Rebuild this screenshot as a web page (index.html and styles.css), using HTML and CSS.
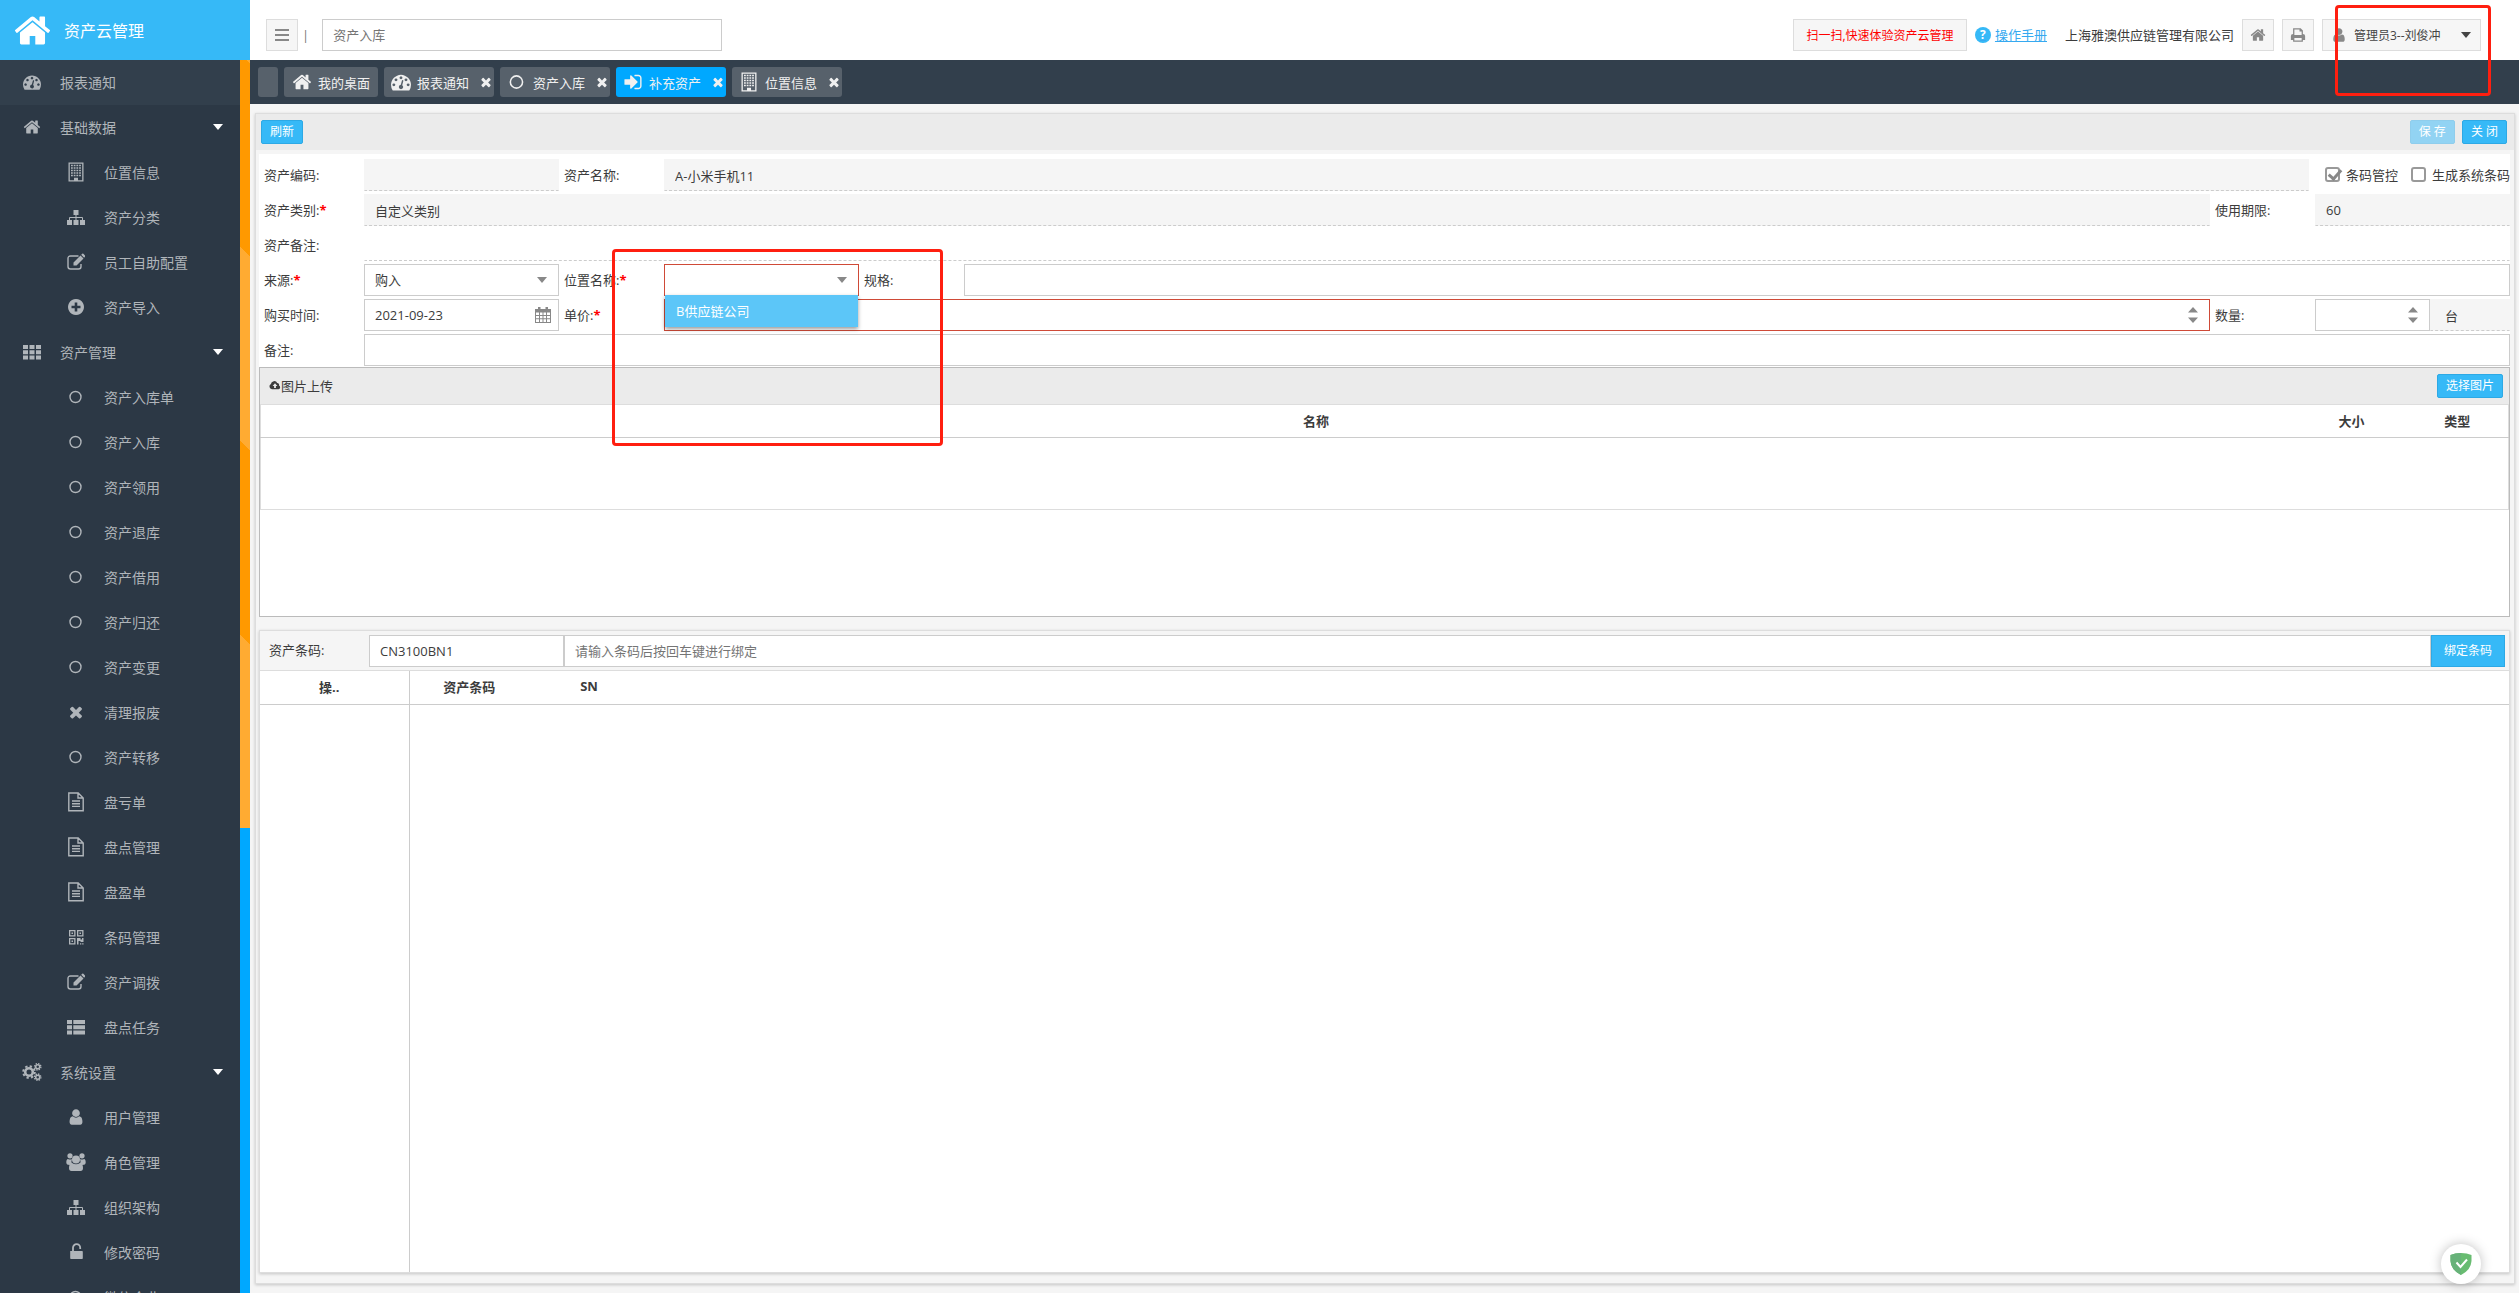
FILE: index.html
```html
<!DOCTYPE html>
<html lang="zh-CN">
<head>
    <meta charset="UTF-8">
    <meta name="viewport" content="width=device-width, initial-scale=1.0">
    <title>资产云管理</title>
    <link rel="stylesheet" href="styles.css">
</head>
<body>
    <!-- Icon sprite -->
    <svg class="sprite" aria-hidden="true">
        <symbol id="i-home" viewBox="0 0 1792 1792"><path d="M1472 992v480q0 26-19 45t-45 19h-384v-384h-256v384h-384q-26 0-45-19t-19-45v-480q0-1 .5-3t.5-3l575-474 575 474q1 2 1 6zm223-69l-62 74q-8 9-21 11h-3q-13 0-21-7l-692-577-692 577q-12 8-24 7-13-2-21-11l-62-74q-8-10-7-23.5t11-21.5l719-599q32-26 76-26t76 26l244 204v-195q0-14 9-23t23-9h192q14 0 23 9t9 23v408l219 182q10 8 11 21.5t-7 23.5z"/></symbol>
        <symbol id="i-dash" viewBox="0 0 1792 1792"><path d="M384 1152q0-53-37.5-90.5t-90.5-37.5-90.5 37.5-37.5 90.5 37.5 90.5 90.5 37.5 90.5-37.5 37.5-90.5zm192-448q0-53-37.5-90.5t-90.5-37.5-90.5 37.5-37.5 90.5 37.5 90.5 90.5 37.5 90.5-37.5 37.5-90.5zm428 481l101-382q6-26-7.5-48.5t-38.5-29.5-48 6.5-30 39.5l-101 382q-60 5-107 43.5t-63 98.5q-20 77 20 146t117 89 146-20 89-117q16-60-6-117t-72-91zm660-33q0-53-37.5-90.5t-90.5-37.5-90.5 37.5-37.5 90.5 37.5 90.5 90.5 37.5 90.5-37.5 37.5-90.5zm-640-640q0-53-37.5-90.5t-90.5-37.5-90.5 37.5-37.5 90.5 37.5 90.5 90.5 37.5 90.5-37.5 37.5-90.5zm448 192q0-53-37.5-90.5t-90.5-37.5-90.5 37.5-37.5 90.5 37.5 90.5 90.5 37.5 90.5-37.5 37.5-90.5zm320 448q0 261-141 483-19 29-54 29h-1402q-35 0-54-29-141-221-141-483 0-182 71-348t191-286 286-191 348-71 348 71 286 191 191 286 71 348z"/></symbol>
        <symbol id="i-signin" viewBox="0 0 1792 1792"><path d="M1312 896q0 26-19 45l-544 544q-19 19-45 19t-45-19-19-45v-288h-448q-26 0-45-19t-19-45v-384q0-26 19-45t45-19h448v-288q0-26 19-45t45-19 45 19l544 544q19 19 19 45zm352-352v704q0 119-84.5 203.5t-203.5 84.5h-320q-13 0-22.5-9.5t-9.5-22.5q0-4-1-20t-.5-26.5 3-23.5 10-19.5 20.5-6.5h320q66 0 113-47t47-113v-704q0-66-47-113t-113-47h-312l-11.5-1-11.5-3-8-5.5-7-9-2-13.5q0-4-1-20t-.5-26.5 3-23.5 10-19.5 20.5-6.5h320q119 0 203.5 84.5t84.5 203.5z"/></symbol>
        <symbol id="i-times" viewBox="0 0 1792 1792"><path d="M1490 1322q0 40-28 68l-136 136q-28 28-68 28t-68-28l-294-294-294 294q-28 28-68 28t-68-28l-136-136q-28-28-28-68t28-68l294-294-294-294q-28-28-28-68t28-68l136-136q28-28 68-28t68 28l294 294 294-294q28-28 68-28t68 28l136 136q28 28 28 68t-28 68l-294 294 294 294q28 28 28 68z"/></symbol>
        <symbol id="i-user" viewBox="0 0 1792 1792"><path d="M1536 1399q0 109-62.5 187t-150.5 78h-854q-88 0-150.5-78t-62.5-187q0-85 8.5-160.5t31.5-152 58.5-131 94-89 134.5-34.5q131 128 313 128t313-128q76 0 134.5 34.5t94 89 58.5 131 31.5 152 8.5 160.5zm-256-887q0 159-112.5 271.5t-271.5 112.5-271.5-112.5-112.5-271.5 112.5-271.5 271.5-112.5 271.5 112.5 112.5 271.5z"/></symbol>
        <symbol id="i-building" viewBox="0 0 18 20"><path fill-rule="evenodd" d="M1.500.5h15v19h-15zM2.800 1.800v16.400h4.200v-2.400h4v2.400h4.200V1.800z"/><path d="M4 3.500h10.500M4 6h10.500M4 8.500h10.500M4 11h10.500M4 13.500h10.500" stroke="currentColor" stroke-width="1.600" stroke-dasharray="1.800 .9"/></symbol>
        <symbol id="i-sitemap" viewBox="0 0 18 18"><path d="M6.500 2h5v5h-5zM0 12h5v5H0zM6.500 12h5v5h-5zM13 12h5v5h-5z"/><path fill="none" stroke="currentColor" d="M9 7v5M2.500 12V9.500h13V12"/></symbol>
        <symbol id="i-edit" viewBox="0 0 18 18"><path fill="none" stroke="currentColor" stroke-width="1.400" d="M11.500 3H3.500Q1 3 1 5.500v8Q1 16 3.500 16h8Q14 16 14 13.500V11"/><path d="M6.500 9.500l7-7 3 3-7 7h-3zM14.200 1.800l1-1q.6-.5 1.200 0l1.700 1.700q.5.600 0 1.200l-1 1z"/></symbol>
        <symbol id="i-plus" viewBox="0 0 18 18"><path fill-rule="evenodd" d="M9 1a8 8 0 1 0 .01 0zM7.700 4.500h2.600v3.200h3.200v2.600h-3.200v3.200H7.700v-3.200H4.500V7.700h3.200z"/></symbol>
        <symbol id="i-th" viewBox="0 0 18 18"><path d="M0 2h5v4H0zM6.500 2h5v4h-5zM13 2h5v4h-5zM0 7.300h5v4H0zM6.500 7.300h5v4h-5zM13 7.300h5v4h-5zM0 12.600h5v4H0zM6.500 12.600h5v4h-5zM13 12.600h5v4h-5z"/></symbol>
        <symbol id="i-circle" viewBox="0 0 18 18"><circle cx="8.500" cy="9" r="5.500" fill="none" stroke="currentColor" stroke-width="1.400"/></symbol>
        <symbol id="i-file" viewBox="0 0 18 20"><path fill="none" stroke="currentColor" stroke-width="1.400" d="M1.800 1h9.400l5 5v12.800H1.800zM11 1v5h5M5 9h8M5 11.700h8M5 14.400h8"/></symbol>
        <symbol id="i-qr" viewBox="0 0 18 18"><path fill-rule="evenodd" d="M2 2h6.500v6.500H2zM3.300 3.300v3.900h3.900V3.300zM10 2h6.500v6.500H10zM11.300 3.300v3.900h3.900V3.300zM2 10h6.500v6.500H2zM3.300 11.300v3.900h3.900v-3.900zM4.500 4.500H6V6H4.500zM12.500 4.500H14V6h-1.500zM4.500 12.500H6V14H4.500zM10 10h3.500v1.500H15V10h1.500v4h-3v-1h-2v3.500H10zM13 15.200h1.300v1.300H13zM15.200 15.200h1.300v1.300h-1.300z"/></symbol>
        <symbol id="i-list" viewBox="0 0 18 18"><path d="M0 2h5v4H0zM6.300 2H18v4H6.300zM0 7.300h5v4H0zM6.300 7.300H18v4H6.300zM0 12.600h5v4H0zM6.300 12.600H18v4H6.300z"/></symbol>
        <symbol id="i-cogs" viewBox="0 0 20 20"><g fill="none" stroke="currentColor"><circle cx="7" cy="10" r="3.800" stroke-width="2.600"/><circle cx="7" cy="10" r="5.800" stroke-width="2" stroke-dasharray="2.300 2.255"/><circle cx="15.700" cy="4.800" r="2" stroke-width="1.500"/><circle cx="15.700" cy="4.800" r="3.200" stroke-width="1.300" stroke-dasharray="1.400 1.113"/><circle cx="15.700" cy="15.200" r="2" stroke-width="1.500"/><circle cx="15.700" cy="15.200" r="3.200" stroke-width="1.300" stroke-dasharray="1.400 1.113"/></g></symbol>
        <symbol id="i-users" viewBox="0 0 20 20"><circle cx="4" cy="3.800" r="2.600"/><circle cx="16" cy="3.800" r="2.600"/><path d="M2 7q2 1 4 0-1.300 2.500.5 5-2 0-2.800 1Q.3 13 .3 10.500.3 7 2 7zM18 7q-2 1-4 0 1.300 2.500-.5 5 2 0 2.800 1 3.400 0 3.400-2.500Q19.700 7 18 7z"/><circle cx="10" cy="7.500" r="4"/><path d="M6 11q4 2.500 8 0 3 .7 3 5 0 3-2.500 3h-9Q3 19 3 16q0-4.300 3-5z"/></symbol>
        <symbol id="i-unlock" viewBox="0 0 18 20"><path d="M3 9h12q.8 0 .8.800v6.400q0 .8-.8.800H4q-.8 0-.8-.8V9z"/><path fill="none" stroke="currentColor" stroke-width="1.800" d="M6 9.500V5.800a3.600 3.600 0 0 1 7.200 0V7"/></symbol>
        <symbol id="i-print" viewBox="0 0 18 18"><path fill-rule="evenodd" d="M3.500 1.500h8.500l2.500 2.500v4q2.500 0 2.500 2v4.500h-2.500v2h-11v-2H1V10q0-2 2.500-2zM4.900 2.900V9h8.200V5.200h-2.400V2.900zM4.900 12.500v2.600h8.200v-2.600z"/></symbol>
        <symbol id="i-calendar" viewBox="0 0 18 18"><path fill-rule="evenodd" d="M1 3h3V1h2.500v2h5V1H14v2h3v14H1zM2 6.500v2.400h3V6.500zM6 6.500v2.400h2.500V6.500zM9.500 6.500v2.400H12V6.500zM13 6.500v2.400h3V6.500zM2 9.900v2.400h3V9.900zM6 9.900v2.400h2.500V9.900zM9.500 9.900v2.400H12V9.900zM13 9.900v2.400h3V9.900zM2 13.300V16h3v-2.700zM6 13.300V16h2.500v-2.700zM9.500 13.300V16H12v-2.700zM13 13.300V16h3v-2.700z"/></symbol>
        <symbol id="i-cloud" viewBox="0 0 20 16"><path fill-rule="evenodd" d="M5 15a4.500 4.500 0 0 1-1.800-8.500 5.500 5.500 0 0 1 10.500-1.700 3 3 0 0 1 3 4A3.300 3.300 0 0 1 16 15zM10 5L6 9.500h2.500V13h3V9.500H14z"/></symbol>
        <symbol id="i-down" viewBox="0 0 10 6"><path d="M0 0h10L5 6z"/></symbol>
        <symbol id="i-spin" viewBox="0 0 10 16"><path d="M0 5.500h10L5 0zM0 10.500h10L5 16z"/></symbol>
        <symbol id="i-bars" viewBox="0 0 14 14"><path d="M0 1h14v2H0zM0 6h14v2H0zM0 11h14v2H0z"/></symbol>
    </svg>

    <div class="app">
        <aside class="sidebar">
            <div class="logo"><svg><use href="#i-home"/></svg><span>资产云管理</span></div>
            <div class="menu-wrap">
                <nav class="menu">
                    <a href="#" class="top active"><svg><use href="#i-dash"/></svg>报表通知</a>
                    <a href="#" class="top"><svg><use href="#i-home"/></svg>基础数据<svg class="caret"><use href="#i-down"/></svg></a>
                    <a href="#" class="sub"><svg class="tall"><use href="#i-building"/></svg>位置信息</a>
                    <a href="#" class="sub"><svg><use href="#i-sitemap"/></svg>资产分类</a>
                    <a href="#" class="sub"><svg><use href="#i-edit"/></svg>员工自助配置</a>
                    <a href="#" class="sub"><svg><use href="#i-plus"/></svg>资产导入</a>
                    <a href="#" class="top"><svg><use href="#i-th"/></svg>资产管理<svg class="caret"><use href="#i-down"/></svg></a>
                    <a href="#" class="sub"><svg><use href="#i-circle"/></svg>资产入库单</a>
                    <a href="#" class="sub"><svg><use href="#i-circle"/></svg>资产入库</a>
                    <a href="#" class="sub"><svg><use href="#i-circle"/></svg>资产领用</a>
                    <a href="#" class="sub"><svg><use href="#i-circle"/></svg>资产退库</a>
                    <a href="#" class="sub"><svg><use href="#i-circle"/></svg>资产借用</a>
                    <a href="#" class="sub"><svg><use href="#i-circle"/></svg>资产归还</a>
                    <a href="#" class="sub"><svg><use href="#i-circle"/></svg>资产变更</a>
                    <a href="#" class="sub"><svg><use href="#i-times"/></svg>清理报废</a>
                    <a href="#" class="sub"><svg><use href="#i-circle"/></svg>资产转移</a>
                    <a href="#" class="sub"><svg class="tall"><use href="#i-file"/></svg>盘亏单</a>
                    <a href="#" class="sub"><svg class="tall"><use href="#i-file"/></svg>盘点管理</a>
                    <a href="#" class="sub"><svg class="tall"><use href="#i-file"/></svg>盘盈单</a>
                    <a href="#" class="sub"><svg><use href="#i-qr"/></svg>条码管理</a>
                    <a href="#" class="sub"><svg><use href="#i-edit"/></svg>资产调拨</a>
                    <a href="#" class="sub"><svg><use href="#i-list"/></svg>盘点任务</a>
                    <a href="#" class="top"><svg class="wide"><use href="#i-cogs"/></svg>系统设置<svg class="caret"><use href="#i-down"/></svg></a>
                    <a href="#" class="sub"><svg><use href="#i-user"/></svg>用户管理</a>
                    <a href="#" class="sub"><svg class="wide"><use href="#i-users"/></svg>角色管理</a>
                    <a href="#" class="sub"><svg><use href="#i-sitemap"/></svg>组织架构</a>
                    <a href="#" class="sub"><svg class="tall"><use href="#i-unlock"/></svg>修改密码</a>
                    <a href="#" class="sub"><svg><use href="#i-circle"/></svg>微信企业</a>
                </nav>
                <div class="scroll-track"><div class="scroll-thumb"></div></div>
            </div>
        </aside>

        <div class="main">
            <header class="header">
                <button type="button" class="tool" aria-label="菜单"><svg class="bars"><use href="#i-bars"/></svg></button>
                <span class="divider">|</span>
                <input type="text" class="search" placeholder="资产入库" aria-label="搜索">
                <div class="header-right">
                    <button type="button" class="tool scan">扫一扫,快速体验资产云管理</button>
                    <a href="#" class="manual"><span class="question">?</span><span class="manual-text">操作手册</span></a>
                    <span class="company">上海雅澳供应链管理有限公司</span>
                    <button type="button" class="tool" aria-label="首页"><svg><use href="#i-home"/></svg></button>
                    <button type="button" class="tool" aria-label="打印"><svg><use href="#i-print"/></svg></button>
                    <button type="button" class="tool account"><svg><use href="#i-user"/></svg><span>管理员3--刘俊冲</span><svg class="caret"><use href="#i-down"/></svg></button>
                </div>
                <div class="mark mark-user"></div>
            </header>

            <nav class="tabs">
                <button type="button" class="tab blank" aria-label="更多"></button>
                <button type="button" class="tab home"><svg><use href="#i-home"/></svg>我的桌面</button>
                <button type="button" class="tab"><svg><use href="#i-dash"/></svg>报表通知<svg class="close"><use href="#i-times"/></svg></button>
                <button type="button" class="tab"><svg><use href="#i-circle"/></svg>资产入库<svg class="close"><use href="#i-times"/></svg></button>
                <button type="button" class="tab current"><svg><use href="#i-signin"/></svg>补充资产<svg class="close"><use href="#i-times"/></svg></button>
                <button type="button" class="tab"><svg><use href="#i-building"/></svg>位置信息<svg class="close"><use href="#i-times"/></svg></button>
            </nav>

            <main class="panel">
                <div class="toolbar">
                    <button type="button" class="btn">刷新</button>
                    <div class="toolbar-right">
                        <button type="button" class="btn" disabled>保 存</button>
                        <button type="button" class="btn">关 闭</button>
                    </div>
                </div>
                <div class="panel-body">
                    <form class="form">
                        <div class="row">
                            <label class="lbl" for="code">资产编码:</label>
                            <div class="field readonly w-md"><input id="code" type="text" readonly></div>
                            <label class="lbl" for="name">资产名称:</label>
                            <div class="field readonly"><input id="name" type="text" value="A-小米手机11" readonly></div>
                            <div class="checks">
                                <label><input type="checkbox" checked>条码管控</label>
                                <label><input type="checkbox">生成系统条码</label>
                            </div>
                        </div>
                        <div class="row">
                            <label class="lbl" for="category">资产类别:<b>*</b></label>
                            <div class="field readonly"><input id="category" type="text" value="自定义类别" readonly></div>
                            <label class="lbl" for="term">使用期限:</label>
                            <div class="field readonly w-md"><input id="term" type="text" value="60" readonly></div>
                        </div>
                        <div class="row">
                            <label class="lbl" for="assetNote">资产备注:</label>
                            <div class="field readonly plain"><input id="assetNote" type="text" readonly></div>
                        </div>
                        <div class="row">
                            <label class="lbl" for="source">来源:<b>*</b></label>
                            <div class="field w-md">
                                <select id="source"><option>购入</option></select>
                                <svg class="arrow"><use href="#i-down"/></svg>
                            </div>
                            <label class="lbl" for="location">位置名称:<b>*</b></label>
                            <div class="field invalid w-md">
                                <select id="location"><option></option><option>B供应链公司</option></select>
                                <svg class="arrow"><use href="#i-down"/></svg>
                                <ul class="dropdown"><li>B供应链公司</li></ul>
                                <div class="mark mark-location"></div>
                            </div>
                            <label class="lbl" for="spec">规格:</label>
                            <div class="field"><input id="spec" type="text"></div>
                        </div>
                        <div class="row">
                            <label class="lbl" for="date">购买时间:</label>
                            <div class="field w-md">
                                <input id="date" type="text" value="2021-09-23">
                                <svg class="calendar"><use href="#i-calendar"/></svg>
                            </div>
                            <label class="lbl" for="price">单价:<b>*</b></label>
                            <div class="field invalid">
                                <input id="price" type="number">
                                <svg class="spin"><use href="#i-spin"/></svg>
                            </div>
                            <label class="lbl" for="count">数量:</label>
                            <div class="field w-sm">
                                <input id="count" type="number">
                                <svg class="spin"><use href="#i-spin"/></svg>
                            </div>
                            <div class="field readonly w-xs"><input type="text" value="台" aria-label="单位" readonly></div>
                        </div>
                        <div class="row">
                            <label class="lbl" for="note">备注:</label>
                            <div class="field"><input id="note" type="text"></div>
                        </div>
                    </form>

                    <section class="upload">
                        <div class="upload-head">
                            <span><svg><use href="#i-cloud"/></svg>图片上传</span>
                            <button type="button" class="btn">选择图片</button>
                        </div>
                        <table>
                            <thead><tr><th class="c-check"></th><th>名称</th><th class="c-size">大小</th><th class="c-type">类型</th></tr></thead>
                            <tbody><tr><td colspan="4"></td></tr></tbody>
                        </table>
                    </section>

                    <section class="barcode">
                        <div class="barcode-head">
                            <label for="barcode">资产条码:</label>
                            <div class="field w-md"><input id="barcode" type="text" value="CN3100BN1"></div>
                            <div class="field"><input type="text" placeholder="请输入条码后按回车键进行绑定" aria-label="绑定条码"></div>
                            <button type="button" class="btn bind">绑定条码</button>
                        </div>
                        <div class="barcode-grid">
                            <table>
                                <thead><tr><th class="c-op">操..</th><th class="c-code">资产条码</th><th class="c-code">SN</th><th></th></tr></thead>
                                <tbody><tr><td class="c-op"></td><td></td><td></td><td></td></tr></tbody>
                            </table>
                        </div>
                    </section>
                </div>
            </main>
        </div>
    </div>

    <button type="button" class="shield" aria-label="防护">
        <svg viewBox="0 0 22 22"><path fill="#68bc71" d="M11 0q6 0 10.500 2v6Q21 17 11 22 1 17 .500 8V2Q5 0 11 0z"/><path fill="#67b279" d="M11 0v22Q1 17 .500 8V2Q5 0 11 0z"/><path fill="none" stroke="#fff" stroke-width="2" d="M6.500 9.500l4 4.500L17 6.500"/></svg>
    </button>
</body>
</html>
```
FILE: styles.css
```css
* {
    box-sizing: border-box;
}

body {
    margin: 0;
    font-family: "Open Sans", "Noto Sans CJK SC", sans-serif;
    font-size: 13px;
    color: #3c3c3c;
    background-color: #f5f5f5;
}

button, input, select {
    font-family: inherit;
    font-size: inherit;
    color: inherit;
}

button {
    cursor: pointer;
}

svg {
    width: 16px;
    height: 16px;
    fill: currentColor;
    flex: none;
}

.sprite {
    display: none;
}

.app {
    display: flex;
    height: 100vh;
    overflow: hidden;
}

/* Sidebar */
.sidebar {
    display: flex;
    flex-direction: column;
    flex: none;
    width: 250px;
    background-color: #2c3845;
}

.logo {
    display: flex;
    align-items: center;
    gap: 12px;
    flex: none;
    height: 60px;
    padding-left: 13px;
    background-color: #36b9f7;
    color: #fff;
    font-size: 16px;
}

.logo svg {
    width: 39px;
    height: 39px;
}

.menu-wrap {
    display: flex;
    flex: 1;
    min-height: 0;
}

.menu {
    flex: 1;
    overflow: hidden;
}

.menu a {
    display: flex;
    align-items: center;
    height: 45px;
    padding-bottom: 2px;
    color: #b0b5ba;
    font-size: 14px;
    text-decoration: none;
}

.menu svg {
    width: 18px;
    height: 18px;
}

.menu .tall {
    height: 20px;
}

.menu .wide {
    width: 20px;
    height: 20px;
    margin: 0 -1px;
}

.menu .top {
    gap: 19px;
    padding-left: 23px;
    padding-right: 17px;
}

.menu .sub {
    gap: 19px;
    padding-left: 67px;
}

.menu .active {
    background-color: #323f4c;
}

.menu .caret {
    width: 10px;
    height: 6px;
    margin-left: auto;
    color: #fff;
}

.scroll-track {
    width: 10px;
    background-color: #00a8ff;
}

.scroll-thumb {
    height: 768px;
    background-image: repeating-linear-gradient(45deg, #ffab32 0, #ffab32 137px, #ff9900 137px, #ff9900 274px);
}

/* Header */
.main {
    display: flex;
    flex-direction: column;
    flex: 1;
    min-width: 0;
}

.header {
    position: relative;
    display: flex;
    align-items: center;
    flex: none;
    height: 60px;
    padding: 10px 38px 0 16px;
    background-color: #fff;
}

.tool {
    display: flex;
    align-items: center;
    justify-content: center;
    width: 32px;
    height: 32px;
    padding: 0;
    border: 1px solid #ddd;
    background-color: #f6f6f6;
    color: #888;
}

.bars {
    width: 14px;
    height: 14px;
}

.divider {
    margin: 0 13px 0 4px;
    color: #777;
}

.search {
    width: 400px;
    height: 32px;
    padding: 0 10px;
    border: 1px solid #ccc;
}

.header-right {
    display: flex;
    align-items: center;
    gap: 8px;
    margin-left: auto;
}

.scan {
    width: 174px;
    font-size: 12px;
    color: #f00;
}

.manual {
    display: flex;
    align-items: center;
    gap: 4px;
    color: #36a9f0;
}

.question {
    width: 16px;
    height: 16px;
    border-radius: 50%;
    background-color: #36b9f7;
    color: #fff;
    font-size: 12px;
    font-weight: bold;
    line-height: 16px;
    text-align: center;
}

.manual-text {
    text-decoration: underline;
}

.company {
    margin-left: 10px;
}

.manual-text,
.company {
    padding-bottom: 2px;
}

.account {
    justify-content: flex-start;
    width: 159px;
    padding: 0 9px 0 8px;
    gap: 7px;
    font-size: 12px;
}

.account span,
.account .caret {
    color: #444;
}

.account .caret {
    width: 10px;
    height: 6px;
    margin-left: auto;
}

/* Highlight boxes */
.mark {
    position: absolute;
    z-index: 10;
    border: 3px solid #ff1f10;
    border-radius: 4px;
    pointer-events: none;
}

.mark-user {
    top: 5px;
    right: 28px;
    width: 156px;
    height: 91px;
}

.mark-location {
    top: -16px;
    left: -53px;
    width: 331px;
    height: 197px;
}

/* Tabs */
.tabs {
    display: flex;
    align-items: center;
    gap: 6px;
    flex: none;
    height: 44px;
    padding-left: 8px;
    background-color: #323f4c;
}

.tab {
    display: flex;
    align-items: center;
    width: 110px;
    height: 30px;
    padding: 0 1px 0 7px;
    gap: 6px;
    border: 0;
    border-radius: 3px;
    background-color: #57616b;
    color: #f0f0f0;
}

.tab svg {
    width: 20px;
    height: 20px;
}

.tab .close {
    width: 14px;
    height: 14px;
    margin-left: auto;
}

.tab.blank {
    width: 20px;
}

.tab.home {
    width: 94px;
    padding-left: 8px;
}

.tab.current {
    background-color: #00a8ff;
}

/* Page panel */
.panel {
    display: flex;
    flex-direction: column;
    flex: 1;
    min-height: 0;
    margin: 9px 4px 9px 5px;
    border: 1px solid #ddd;
    box-shadow: 0 1px 3px rgba(0, 0, 0, 0.2);
}

.toolbar {
    display: flex;
    align-items: center;
    justify-content: space-between;
    flex: none;
    height: 36px;
    padding: 0 7px 0 5px;
    background-color: #ebebeb;
}

.toolbar-right {
    display: flex;
    gap: 7px;
}

.btn {
    height: 24px;
    padding: 0 8px;
    border: 1px solid #2da9e5;
    border-radius: 2px;
    background-color: #36b9f7;
    color: #fff;
    font-size: 12px;
    line-height: 20px;
}

.btn:disabled {
    background-color: #92d3f3;
    border-color: #8fcdec;
}

.panel-body {
    display: flex;
    flex-direction: column;
    flex: 1;
    min-height: 0;
    padding: 4px 4px 10px 3px;
}

/* Form */
.form {
    display: flex;
    flex-direction: column;
    gap: 3px;
    padding: 5px 0 1px 5px;
    background-color: #fff;
}

.row {
    display: flex;
    align-items: center;
}

.lbl {
    flex: none;
    width: 100px;
    padding-bottom: 2px;
}

.lbl b {
    color: #f00;
}

.field + .lbl {
    margin-left: 5px;
}

.field {
    position: relative;
    display: flex;
    align-items: center;
    flex: 1;
    height: 32px;
    border: 1px solid #ccc;
    background-color: #fff;
}

.field input,
.field select {
    flex: 1;
    min-width: 0;
    width: 0;
    height: 30px;
    padding: 0 10px;
    border: 0;
    outline: 0;
    background: none;
    appearance: none;
}

.field input[type="number"] {
    appearance: textfield;
}

.field svg {
    color: #888;
}

.field .arrow {
    width: 10px;
    height: 6px;
    margin-right: 11px;
}

.field .calendar {
    width: 18px;
    height: 18px;
    margin-right: 6px;
}

.field .spin {
    width: 10px;
    height: 16px;
    margin-right: 11px;
}

.readonly {
    border-color: transparent;
    border-bottom: 1px dashed #ccc;
    background-color: #f5f5f5;
}

.plain {
    background-color: #fff;
}

.invalid {
    border-color: #cf4a37;
}

.w-md {
    flex: 0 0 195px;
}

.w-sm {
    flex: 0 0 115px;
}

.w-xs {
    flex: 0 0 80px;
    padding-left: 4px;
}

.checks {
    display: flex;
    justify-content: flex-end;
    gap: 13px;
    flex: none;
    width: 201px;
}

.checks label {
    display: flex;
    align-items: center;
    gap: 6px;
    padding-bottom: 2px;
}

.checks input {
    position: relative;
    width: 15px;
    height: 15px;
    margin: 0;
    border: 2px solid #999;
    border-radius: 3px;
    appearance: none;
}

.checks input:checked::after {
    content: "";
    position: absolute;
    top: -2px;
    left: 4px;
    width: 5px;
    height: 10px;
    border: solid #888;
    border-width: 0 3px 3px 0;
    transform: rotate(42deg);
}

.dropdown {
    position: absolute;
    z-index: 5;
    top: 100%;
    left: 0;
    width: 100%;
    margin: 0;
    padding: 0;
    list-style: none;
    box-shadow: 0 2px 4px rgba(0, 0, 0, 0.4);
}

.dropdown li {
    height: 32px;
    padding: 0 11px;
    background-color: #5cc6f8;
    color: #fff;
    line-height: 32px;
}

/* Tables */
table {
    width: 100%;
    border-collapse: collapse;
    table-layout: fixed;
    background-color: #fff;
}

th {
    height: 33px;
    padding: 0 0 2px;
    border-bottom: 1px solid #ccc;
}

/* Picture upload */
.upload {
    flex: none;
    height: 250px;
    border: 1px solid #bbb;
    background-color: #fff;
}

.upload-head {
    display: flex;
    align-items: center;
    justify-content: space-between;
    height: 36px;
    padding: 0 6px 0 9px;
    background-color: #ebebeb;
}

.upload-head span {
    display: flex;
    align-items: center;
    padding-bottom: 2px;
}

.upload-head svg {
    width: 12px;
    height: 12px;
}

.upload table {
    border: 1px solid #ddd;
}

.upload td {
    height: 72px;
}

.c-check {
    width: 75px;
}

.c-size {
    width: 110px;
}

.c-type {
    width: 102px;
}

/* Barcode binding */
.barcode {
    display: flex;
    flex-direction: column;
    flex: 1;
    min-height: 0;
    margin-top: 13px;
    border: 1px solid #ddd;
    box-shadow: 0 1px 3px rgba(0, 0, 0, 0.2);
}

.barcode-head {
    display: flex;
    align-items: center;
    flex: none;
    height: 39px;
    padding: 0 4px 0 9px;
}

.barcode-head label {
    flex: none;
    width: 100px;
    padding-bottom: 2px;
}

.bind {
    height: 32px;
    padding: 0 12px;
    border-radius: 0;
}

.barcode-grid {
    flex: 1;
    min-height: 0;
    border-top: 1px solid #ddd;
}

.barcode-grid table {
    height: 100%;
}

.c-op {
    width: 149px;
    padding-right: 10px;
    border-right: 1px solid #ccc;
}

.c-code {
    width: 120px;
}

/* Floating shield */
.shield {
    position: fixed;
    right: 38px;
    bottom: 9px;
    z-index: 20;
    display: flex;
    align-items: center;
    justify-content: center;
    width: 40px;
    height: 40px;
    padding: 0;
    border: 0;
    border-radius: 50%;
    background-color: #fff;
    box-shadow: 0 0 12px rgba(0, 0, 0, 0.25);
}

.shield svg {
    width: 22px;
    height: 22px;
}
```
